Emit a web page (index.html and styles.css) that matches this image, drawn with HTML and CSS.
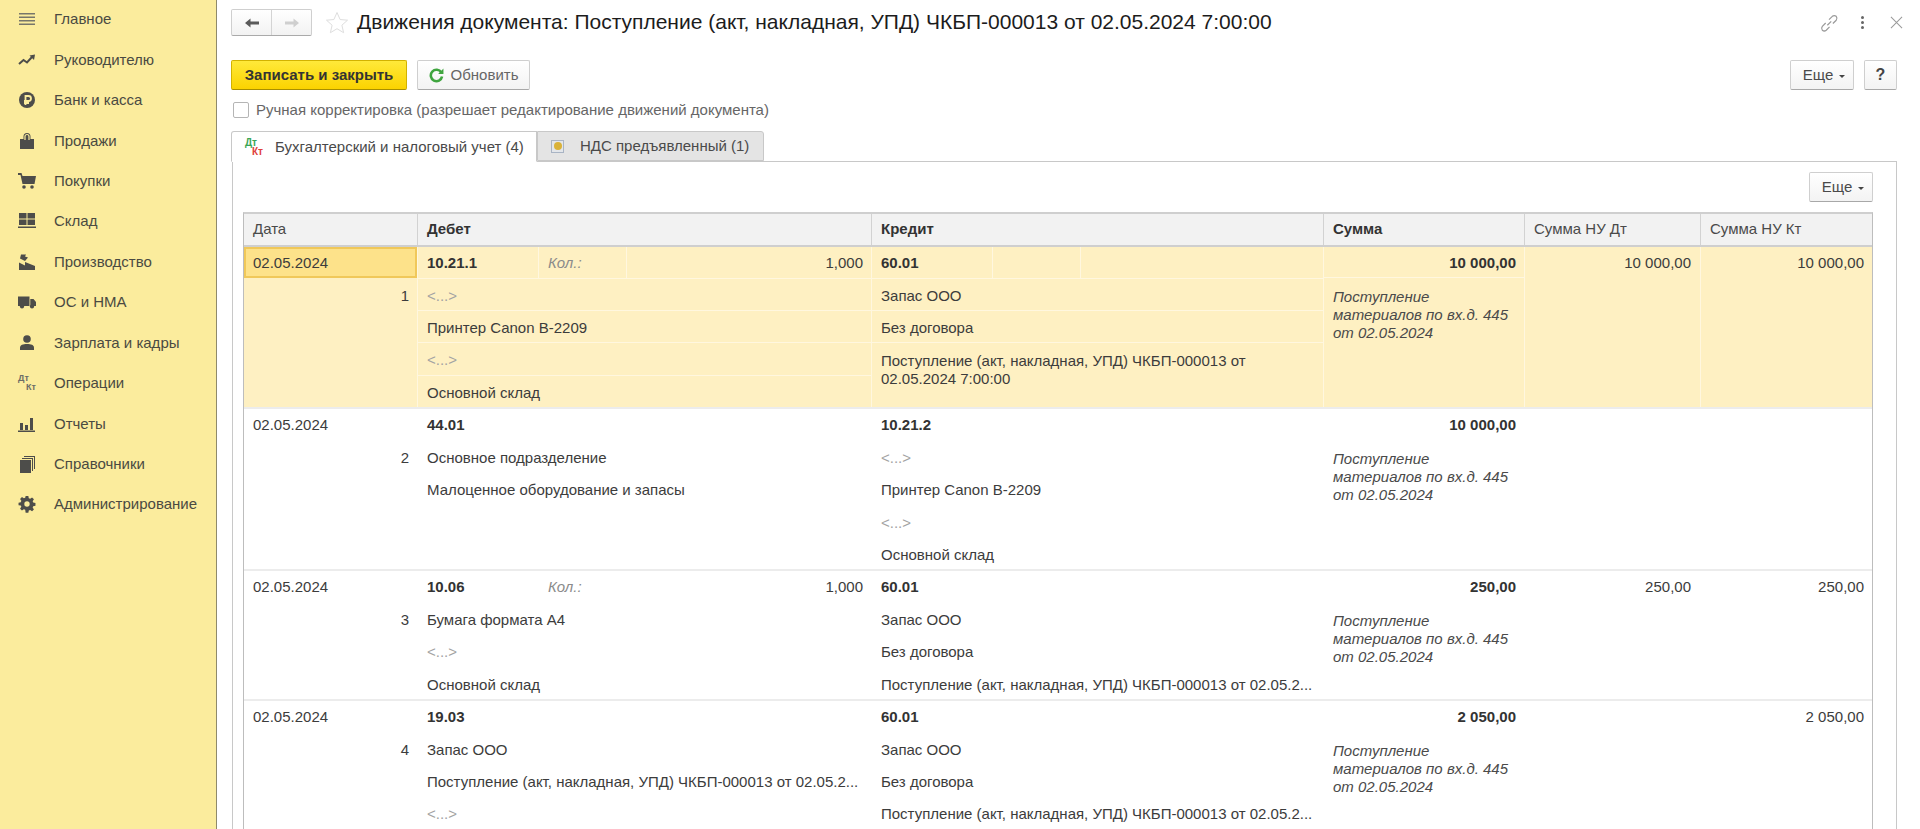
FILE: index.html
```html
<!DOCTYPE html>
<html lang="ru">
<head>
<meta charset="utf-8">
<title>Движения документа</title>
<link rel="stylesheet" href="styles.css">
</head>
<body>
<aside class="sidebar">
  <a class="nav-item"><svg class="nav-icon" viewBox="0 0 18 18"><path class="lines" d="M1 3h16v1.500H1zM1 6.500h16V8H1zM1 10h16v1.500H1zM1 13.500h16V15H1z"/></svg>Главное</a>
  <a class="nav-item"><svg class="nav-icon" viewBox="0 0 18 18"><path class="stroke" d="M1 13l4.500-4 3.500 2.500 5-5.500"/><path d="M11.500 4.500L17 3.500l-1 5.500z"/></svg>Руководителю</a>
  <a class="nav-item"><svg class="nav-icon" viewBox="0 0 18 18"><circle cx="9" cy="9" r="8"/><path class="white" d="M7.500 14V5H10.500a2.300 2.300 0 0 1 0 5H6M6 12h5"/></svg>Банк и касса</a>
  <a class="nav-item"><svg class="nav-icon" viewBox="0 0 18 18"><path d="M2 7h3.500V4.500a3.500 3.500 0 0 1 7 0V7H16v10H2z"/><path class="white thin" d="M7 8V4.500a2 2 0 0 1 4 0V8"/></svg>Продажи</a>
  <a class="nav-item"><svg class="nav-icon" viewBox="0 0 18 18"><path d="M0 1h3.500l1 3H18l-1.500 8H4.500L2.500 3H0z"/><circle cx="6" cy="15" r="1.800"/><circle cx="14" cy="15" r="1.800"/></svg>Покупки</a>
  <a class="nav-item"><svg class="nav-icon" viewBox="0 0 18 18"><path d="M1 1h7.500v5.500H1zM9.500 1H17v5.500H9.500zM1 7.500h7.500V13H1zM9.500 7.500H17V13H9.500zM0 14.500h18V16H0z"/></svg>Склад</a>
  <a class="nav-item"><svg class="nav-icon" viewBox="0 0 18 18"><path d="M1 17V9.500l6 3V9l10 4v4zM3 1.500h5L7 3.500l3 1-3 3.500-5-2.500z"/></svg>Производство</a>
  <a class="nav-item"><svg class="nav-icon" viewBox="0 0 18 18"><path d="M0 3.500h11.500V13H0zM12.300 6h3.200L18 9v4h-5.700z"/><circle cx="4" cy="13.500" r="2.100"/><circle cx="14" cy="13.500" r="2.100"/></svg>ОС и НМА</a>
  <a class="nav-item"><svg class="nav-icon" viewBox="0 0 18 18"><circle cx="9" cy="5" r="3.800"/><path d="M2 16v-2.500C2 11 5 10 9 10s7 1 7 3.500V16z"/></svg>Зарплата и кадры</a>
  <a class="nav-item"><span class="dtkt nav-dtkt"><b>Дт</b><b>Кт</b></span>Операции</a>
  <a class="nav-item"><svg class="nav-icon" viewBox="0 0 18 18"><path d="M2 8h3v7H2zM7 10h3v5H7zM12 3h3v12h-3zM0 15.500h17V17H0z"/></svg>Отчеты</a>
  <a class="nav-item"><svg class="nav-icon" viewBox="0 0 18 18"><path d="M2 5h11v13H2zM4 3h11v13h-1V4H4zM6 1h11v13h-1V2H6z"/></svg>Справочники</a>
  <a class="nav-item"><svg class="nav-icon" viewBox="-1 -1 20 20"><path d="M7.500 0h3l.5 2.500 1.500.6 2.100-1.400 2.100 2.100-1.400 2.100.6 1.500 2.500.5v3l-2.500.5-.6 1.500 1.400 2.100-2.100 2.100-2.100-1.400-1.500.6-.5 2.500h-3L7 15.500l-1.500-.6-2.100 1.400-2.100-2.100 1.400-2.100-.6-1.500L-.4 10.500v-3L2.100 7l.6-1.500L1.300 3.400l2.100-2.100 2.100 1.400L7 2.100z"/><circle class="hole" cx="9" cy="9" r="3"/></svg>Администрирование</a>
</aside>
<main class="content">
  <header class="titlebar">
    <div class="nav-group">
      <button class="nav-btn"><svg class="arrow" viewBox="0 0 14 10"><path d="M0 5l5.500-4.500V3.500H14v3H5.500v3z"/></svg></button>
      <button class="nav-btn"><svg class="arrow arrow-off" viewBox="0 0 14 10"><path d="M14 5L8.500.5V3.500H0v3h8.500v3z"/></svg></button>
    </div>
    <svg class="star" viewBox="0 0 24 24"><path d="M12 1.500l3.100 7 7.400.7-5.600 5 1.700 7.500-6.600-4-6.600 4 1.700-7.500-5.600-5 7.400-.7z"/></svg>
    <h1 class="title">Движения документа: Поступление (акт, накладная, УПД) ЧКБП-000013 от 02.05.2024 7:00:00</h1>
    <div class="title-tools">
      <svg class="tool link" viewBox="0 0 18 18"><path d="M7.500 11l3.500-3.500M6 9l-3 3a2.800 2.800 0 0 0 0 3.500 2.800 2.800 0 0 0 3.500 0l3-3M9 6l3-3a2.800 2.800 0 0 1 3.500 0 2.800 2.800 0 0 1 0 3.500l-3 3"/></svg>
      <span class="dots"><i></i><i></i><i></i></span>
      <svg class="tool close" viewBox="0 0 14 14"><path d="M1 1l12 12M13 1L1 13"/></svg>
    </div>
  </header>

  <div class="toolbar">
    <button class="btn btn-primary">Записать и закрыть</button>
    <button class="btn btn-refresh"><svg class="refresh" viewBox="0 0 14 14"><path d="M11.500 4.200A5.300 5.300 0 1 0 12.200 8"/><path class="fill" d="M8.500 5.500h5V.5z"/></svg>Обновить</button>
    <span class="spacer"></span>
    <button class="btn btn-more">Еще<i class="caret"></i></button>
    <button class="btn btn-help">?</button>
  </div>

  <label class="check-row"><span class="checkbox"></span>Ручная корректировка (разрешает редактирование движений документа)</label>

  <nav class="tabs">
    <div class="tab tab-active"><span class="dtkt tab-dtkt"><b>Дт</b><b>Кт</b></span>Бухгалтерский и налоговый учет (4)</div>
    <div class="tab"><span class="nds-icon"><i></i></span>НДС предъявленный (1)</div>
  </nav>

  <section class="panel">
    <div class="panel-tools"><button class="btn btn-more">Еще<i class="caret"></i></button></div>
    <div class="grid">
      <div class="row head">
        <div class="hcell">Дата</div>
        <div class="hcell strong">Дебет</div>
        <div class="hcell strong">Кредит</div>
        <div class="hcell strong">Сумма</div>
        <div class="hcell">Сумма НУ Дт</div>
        <div class="hcell">Сумма НУ Кт</div>
      </div>

      <div class="row rec rec-active">
        <div class="col"><div class="line first date selected">02.05.2024</div><div class="line num">1</div></div>
        <div class="col sep">
          <div class="line first triple"><b class="cell">10.21.1</b><span class="cell qty">Кол.:</span><span class="cell amount">1,000</span></div>
          <div class="line muted ruled">&lt;...&gt;</div>
          <div class="line ruled">Принтер Canon B-2209</div>
          <div class="line muted ruled">&lt;...&gt;</div>
          <div class="line ruled">Основной склад</div>
        </div>
        <div class="col sep">
          <div class="line first triple"><b class="cell">60.01</b><span class="cell qty"></span><span class="cell amount"></span></div>
          <div class="line ruled">Запас ООО</div>
          <div class="line ruled">Без договора</div>
          <div class="line wrap ruled">Поступление (акт, накладная, УПД) ЧКБП-000013 от 02.05.2024 7:00:00</div>
        </div>
        <div class="col sep">
          <div class="line first total ruled-b">10 000,00</div>
          <div class="note">Поступление материалов по вх.д. 445 от 02.05.2024</div>
        </div>
        <div class="col sep"><div class="line first right">10 000,00</div></div>
        <div class="col sep"><div class="line first right">10 000,00</div></div>
      </div>

      <div class="row rec">
        <div class="col"><div class="line first date">02.05.2024</div><div class="line num">2</div></div>
        <div class="col">
          <div class="line first"><b>44.01</b></div>
          <div class="line">Основное подразделение</div>
          <div class="line">Малоценное оборудование и запасы</div>
        </div>
        <div class="col">
          <div class="line first"><b>10.21.2</b></div>
          <div class="line muted">&lt;...&gt;</div>
          <div class="line">Принтер Canon B-2209</div>
          <div class="line muted">&lt;...&gt;</div>
          <div class="line">Основной склад</div>
        </div>
        <div class="col">
          <div class="line first total">10 000,00</div>
          <div class="note">Поступление материалов по вх.д. 445 от 02.05.2024</div>
        </div>
        <div class="col"></div>
        <div class="col"></div>
      </div>

      <div class="row rec">
        <div class="col"><div class="line first date">02.05.2024</div><div class="line num">3</div></div>
        <div class="col">
          <div class="line first triple"><b class="cell">10.06</b><span class="cell qty">Кол.:</span><span class="cell amount">1,000</span></div>
          <div class="line">Бумага формата А4</div>
          <div class="line muted">&lt;...&gt;</div>
          <div class="line">Основной склад</div>
        </div>
        <div class="col">
          <div class="line first"><b>60.01</b></div>
          <div class="line">Запас ООО</div>
          <div class="line">Без договора</div>
          <div class="line">Поступление (акт, накладная, УПД) ЧКБП-000013 от 02.05.2...</div>
        </div>
        <div class="col">
          <div class="line first total">250,00</div>
          <div class="note">Поступление материалов по вх.д. 445 от 02.05.2024</div>
        </div>
        <div class="col"><div class="line first right">250,00</div></div>
        <div class="col"><div class="line first right">250,00</div></div>
      </div>

      <div class="row rec">
        <div class="col"><div class="line first date">02.05.2024</div><div class="line num">4</div></div>
        <div class="col">
          <div class="line first"><b>19.03</b></div>
          <div class="line">Запас ООО</div>
          <div class="line">Поступление (акт, накладная, УПД) ЧКБП-000013 от 02.05.2...</div>
          <div class="line muted">&lt;...&gt;</div>
        </div>
        <div class="col">
          <div class="line first"><b>60.01</b></div>
          <div class="line">Запас ООО</div>
          <div class="line">Без договора</div>
          <div class="line">Поступление (акт, накладная, УПД) ЧКБП-000013 от 02.05.2...</div>
        </div>
        <div class="col">
          <div class="line first total">2 050,00</div>
          <div class="note">Поступление материалов по вх.д. 445 от 02.05.2024</div>
        </div>
        <div class="col"></div>
        <div class="col"><div class="line first right">2 050,00</div></div>
      </div>
    </div>
  </section>
</main>
</body>
</html>
```
FILE: styles.css
```css
* { box-sizing: border-box; }
html, body { margin: 0; height: 829px; overflow: hidden; }
body {
  display: flex;
  background: #fff;
  color: #3c3c3c;
  font: 15px/18px "Liberation Sans", Arial, sans-serif;
}
button { font: inherit; color: inherit; }

/* sidebar */
.sidebar {
  flex: 0 0 217px;
  background: #fbec9d;
  border-right: 1px solid #8f8a6a;
  padding-top: 1px;
}
.nav-item {
  display: flex;
  align-items: center;
  height: 40.45px;
  padding-left: 18px;
  gap: 18px;
  font-size: 15px;
  color: #4a4a42;
  position: relative;
  top: -2px;
}
.nav-icon { width: 18px; height: 18px; fill: #4d4d4a; flex: none; }
.nav-icon .lines { fill: #77766a; }
.nav-icon .stroke { fill: none; stroke: #4d4d4a; stroke-width: 2; }
.nav-icon .white { fill: none; stroke: #fbec9d; stroke-width: 1.8; }
.nav-icon .thin { stroke-width: 1.2; }
.nav-icon .hole { fill: #fbec9d; }
.dtkt { display: flex; flex-direction: column; flex: none; font-size: 9px; line-height: 9px; }
.dtkt b { display: block; }
.dtkt b + b { align-self: flex-end; }
.nav-dtkt { width: 18px; color: #6c6c66; }
.tab-dtkt { width: 18px; margin-right: 12px; font-size: 10px; }
.tab-dtkt b:first-child { color: #3aa655; }
.tab-dtkt b:last-child { color: #e0413a; }

/* main column */
.content {
  flex: 1;
  min-width: 0;
  padding: 9px 23px 0 14px;
  display: flex;
  flex-direction: column;
}
.titlebar { display: flex; align-items: center; height: 27px; margin-right: -6px; }
.nav-group {
  display: flex;
  width: 81px;
  height: 27px;
  border: 1px solid #cfcfcf;
  border-bottom-color: #aaa;
  border-radius: 2px;
  background: linear-gradient(#fff, #f2f2f2);
}
.nav-btn {
  flex: 1;
  padding: 0;
  border: 0;
  background: none;
  display: flex;
  align-items: center;
  justify-content: center;
}
.nav-btn + .nav-btn { border-left: 1px solid #d4d4d4; }
.arrow { width: 14px; height: 10px; fill: #5a5a5a; }
.arrow-off { fill: #cfcfcf; }
.star { width: 24px; height: 24px; margin-left: 13px; fill: #fff; stroke: #dedede; stroke-width: 1; flex: none; }
.title { margin: -1px 0 0 8px; font-size: 21px; line-height: 24px; font-weight: 400; color: #1c1c1c; white-space: nowrap; }
.title-tools { margin-left: auto; display: flex; align-items: center; gap: 25px; }
.tool { fill: none; stroke: #9a9a9a; stroke-width: 1.1; }
.link { width: 20px; height: 20px; margin-right: -3px; }
.close { width: 13px; height: 13px; }
.dots { display: flex; flex-direction: column; gap: 2px; margin-right: 1px; }
.dots i { width: 3px; height: 3px; background: #666; border-radius: 50%; }

.toolbar { display: flex; margin-top: 24px; gap: 10px; height: 30px; }
.spacer { flex: 1; }
.btn {
  height: 30px;
  padding: 0 12px;
  border: 1px solid #cfcfcf;
  border-bottom-color: #a8a8a8;
  border-radius: 2px;
  background: linear-gradient(#fff, #f3f3f3);
  display: inline-flex;
  align-items: center;
  justify-content: center;
  color: #4a4a4a;
  font-size: 15px;
}
.btn-primary {
  width: 176px;
  padding: 0;
  background: linear-gradient(#ffe93a, #fbd300);
  border-color: #d2b200;
  border-bottom-color: #a98f00;
  color: #333;
  font-weight: 700;
}
.btn-refresh { width: 113px; padding: 0; gap: 7px; color: #666; }
.refresh { width: 15px; height: 15px; fill: none; stroke: #3fa53f; stroke-width: 2.4; }
.refresh .fill { fill: #3fa53f; stroke: none; }
.btn-more { width: 64px; padding: 0 0 0 4px; gap: 6px; }
.caret { width: 0; height: 0; margin-top: 3px; border: 3px solid transparent; border-top-color: #444; border-bottom: 0; }
.btn-help { width: 33px; padding: 0; font-weight: 700; font-size: 16px; color: #444; }

.check-row { display: flex; align-items: center; height: 16px; margin-top: 12px; margin-left: 2px; gap: 7px; color: #666; }
.checkbox { width: 16px; height: 16px; border: 1px solid #b5b5b5; border-radius: 2px; background: #fff; flex: none; }

.tabs { display: flex; margin-top: 13px; height: 30px; position: relative; z-index: 1; }
.tab {
  height: 30px;
  width: 227px;
  display: flex;
  align-items: center;
  padding-left: 13px;
  background: #e4e4e4;
  border: 1px solid #c8c8c8;
  border-radius: 0 3px 0 0;
  color: #4a4a4a;
}
.tab-active {
  width: 306px;
  background: #fff;
  border-bottom-color: #fff;
  border-radius: 3px 0 0 0;
  height: 31px;
}
.nds-icon {
  width: 13px;
  height: 13px;
  margin-right: 16px;
  border: 1px solid #a9b4c4;
  background: #e3e6ea;
  display: flex;
  align-items: center;
  justify-content: center;
}
.nds-icon i { width: 8px; height: 8px; border-radius: 50%; background: #d9b23a; }

.panel {
  flex: 1;
  min-height: 0;
  margin-left: 1px;
  padding: 10px 23px 0 10px;
  border: 1px solid #c8c8c8;
  border-bottom: 0;
  overflow: hidden;
}
.panel-tools { display: flex; justify-content: flex-end; height: 30px; margin-bottom: 10px; }

.grid { width: 1630px; border-right: 1px solid #bdbdbd; border-left: 1px solid #bdbdbd; border-top: 2px solid #cfcfcf; }
.row { display: grid; grid-template-columns: 173px 454px 452px 201px 176px 173px; }
.head { height: 33px; background: #f2f2f2; border-bottom: 2px solid #cfcfcf; }
.hcell { padding: 0 8px 0 9px; line-height: 29px; border-left: 1px solid #d2d2d2; color: #4a4a4a; }
.hcell:first-child { border-left: 0; }
.strong { font-weight: 700; color: #333; }

.rec { border-bottom: 2px solid #ececec; }
.rec-active { background: #fef0c2; }
.col { min-width: 0; }
.rec-active .sep { box-shadow: inset 1px 0 0 #fff7df; }
.line {
  height: 32.4px;
  padding: 0 8px 0 10px;
  line-height: 35px;
  white-space: nowrap;
  overflow: hidden;
  color: #3c3c3c;
}
.line.first { height: 30.6px; line-height: 32px; }
.line.date { padding-left: 9px; }
.line b { color: #333; }
.ruled { box-shadow: inset 0 1px 0 #fff7df; }
.ruled-b { box-shadow: inset 0 -1px 0 #fff7df; }
.line.selected { background: #fde28a; border: 2px solid #f0c85a; padding-left: 7px; line-height: 28px; }
.num { text-align: right; }
.muted { color: #a3a3a3; }
.right, .total { text-align: right; }
.right { padding-right: 9px; }
.total { font-weight: 700; color: #333; }
.triple { display: grid; grid-template-columns: 121px 88px 1fr; padding: 0; }
.cell { padding: 0 8px 0 10px; overflow: hidden; }
.rec-active .cell + .cell { box-shadow: inset 1px 0 0 #fff7df; }
.qty { font-style: italic; color: #8b8b8b; }
.amount { text-align: right; }
.wrap { height: auto; padding-top: 10px; white-space: normal; line-height: 18px; padding-right: 60px; }
.note { padding: 10px 8px 0 10px; font-style: italic; line-height: 18px; color: #4a4a4a; }
```
